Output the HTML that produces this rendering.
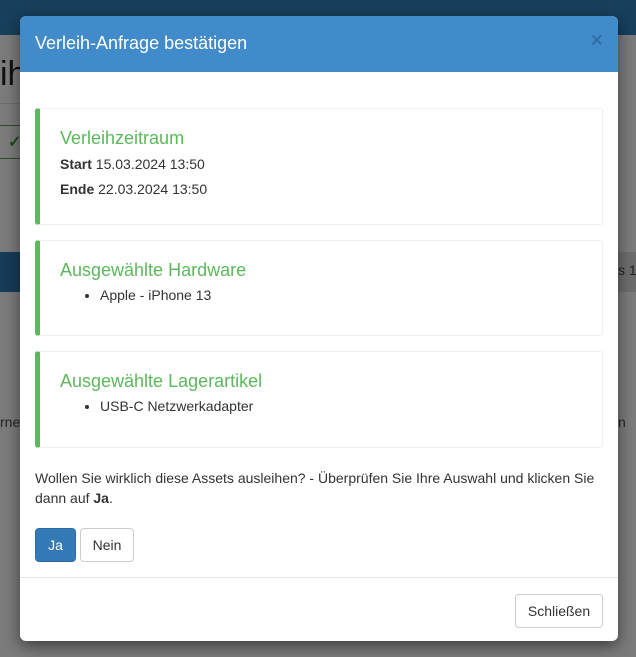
<!DOCTYPE html>
<html><head><meta charset="utf-8"><style>
*{box-sizing:border-box}
body{margin:0;width:636px;height:657px;position:relative;overflow:hidden;background:#7b7b7b;font-family:"Liberation Sans",sans-serif;font-size:14px;color:#333}
.abs{position:absolute;white-space:nowrap}
.modal{position:absolute;left:20px;top:16px;width:598px;height:625px;background:#fff;border-radius:6px;box-shadow:0 5px 15px rgba(0,0,0,.5);overflow:hidden}
.hdr{height:56px;background:#428bca;color:#fff;font-size:18px;padding:17px 15px 0;position:relative}
.close{position:absolute;right:15px;top:13px;font-size:21px;font-weight:bold;color:#2a5f8f;opacity:.6}
.card{position:absolute;left:15px;width:568px;border:1px solid #eee;border-left:5px solid #5cb85c;border-radius:3px}
.card h4{margin:0;color:#5cb85c;font-weight:normal;font-size:18px;position:absolute;left:20px}
.card ul{margin:0;padding-left:60px;position:absolute;left:0}
.btn{position:absolute;border:1px solid #ccc;border-radius:4px;background:#fff;text-align:center;line-height:32px;font-size:14px}
</style></head><body>
<div class="abs" style="left:0;top:0;width:636px;height:35px;background:#183f5c"></div>
<div class="abs" style="left:0;top:55px;font-size:34px;color:#111">ih</div>
<div class="abs" style="left:0;top:103px;width:20px;height:1px;background:#6d6d6d"></div>
<div class="abs" style="left:0;top:125px;width:20px;height:1px;background:#2e4a2e"></div>
<div class="abs" style="left:8px;top:132px;color:#1d4d1d;font-size:16px;font-weight:bold">✓</div>
<div class="abs" style="left:0;top:158px;width:20px;height:1px;background:#2e4a2e"></div>
<div class="abs" style="left:0;top:252px;width:20px;height:40px;background:#163c58"></div>
<div class="abs" style="left:618px;top:252px;width:18px;height:40px;background:#6d6d6d"></div>
<div class="abs" style="left:618px;top:262px;color:#222;font-size:14px">s 11</div>
<div class="abs" style="left:0;top:414px;color:#222">rner</div>
<div class="abs" style="left:618px;top:414px;color:#222">n</div>
<div class="modal">
<div class="hdr">Verleih-Anfrage bestätigen<span class="close">×</span></div>
<div class="card" style="top:92px;height:117px">
<h4 style="top:19px">Verleihzeitraum</h4>
<div class="abs" style="left:20px;top:47px"><b>Start</b> 15.03.2024 13:50</div>
<div class="abs" style="left:20px;top:72px"><b>Ende</b> 22.03.2024 13:50</div>
</div>
<div class="card" style="top:224px;height:96px">
<h4 style="top:19px">Ausgewählte Hardware</h4>
<ul style="top:46px"><li>Apple - iPhone 13</li></ul>
</div>
<div class="card" style="top:335px;height:97px">
<h4 style="top:19px">Ausgewählte Lagerartikel</h4>
<ul style="top:46px"><li>USB-C Netzwerkadapter</li></ul>
</div>
<div class="abs" style="left:15px;top:452px;width:570px;line-height:20px;white-space:normal">Wollen Sie wirklich diese Assets ausleihen? - Überprüfen Sie Ihre Auswahl und klicken Sie dann auf <b>Ja</b>.</div>
<div class="btn" style="left:15px;top:512px;width:41px;height:34px;background:#337ab7;border-color:#2e6da4;color:#fff">Ja</div>
<div class="btn" style="left:60px;top:512px;width:54px;height:34px">Nein</div>
<div class="abs" style="left:0;top:561px;width:598px;height:1px;background:#e5e5e5"></div>
<div class="btn" style="left:495px;top:578px;width:88px;height:34px">Schließen</div>
</div>
</body></html>
